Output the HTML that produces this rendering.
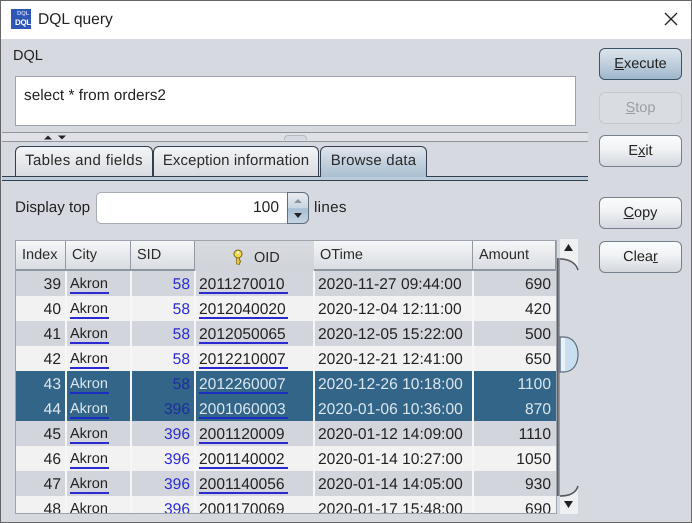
<!DOCTYPE html>
<html><head><meta charset="utf-8">
<style>
html,body{margin:0;padding:0;width:692px;height:523px;overflow:hidden;background:#fff}
*{box-sizing:border-box}
body{font-family:"Liberation Sans",sans-serif;font-size:14px;color:#222;position:relative;text-rendering:geometricPrecision}
#w{position:absolute;left:0;top:0;width:692px;height:523px;filter:blur(.35px);overflow:hidden}
.a{position:absolute}
.t{position:absolute;white-space:nowrap;line-height:16px}
.btn{position:absolute;left:599px;width:83px;height:32px;border:1px solid #75808c;border-radius:6px;background:linear-gradient(#fbfcfd,#f0f2f4 45%,#d3d8de);text-align:center;line-height:30px;font-size:14.5px;color:#222}
.tab{position:absolute;top:146px;height:30px;border:1px solid #333f4d;border-bottom:none;border-radius:6px 6px 0 0;background:linear-gradient(#f4f5f7,#d8dbe0);text-align:center;line-height:28px;font-size:15px;color:#2a2a2a}
.hd{position:absolute;top:241px;height:30px;background:linear-gradient(#f5f6f8,#d9dce1);border-right:1px solid #9299a3;border-bottom:2px solid #8e96a0;font-size:14.5px;line-height:29px;padding-left:6px;color:#2a2a2a}
.r{position:absolute;left:16px;width:540px;height:25px}
.c{position:absolute;top:0;height:25px;line-height:27px;font-size:15.6px;white-space:nowrap;color:#222}
.k{font-size:14.5px}
.r.o{background:#d2d5db}.r.e{background:#f2f2f3}.r.s{background:#336588}
.rt{text-align:right}
.u{position:absolute;height:2px;background:#2a2ad0;top:21px}
.bl{color:#2a2ad0}
.s .c{color:#dbe6ef}
.s .bl{color:#1b2f9d}
.s .u{background:#1a2fc0}
.v{position:absolute;top:271px;width:2px;height:242px;background:#f6f6f7}
</style></head><body><div id="w">
<div class="a" style="left:0;top:0;width:692px;height:523px;background:#d6d9df;border:1px solid #666"></div>
<div class="a" style="left:1px;top:1px;width:690px;height:38px;background:#fff"></div>
<div class="a" style="left:11px;top:9px;width:20px;height:20px;background:#2f55b5;overflow:hidden">
<div class="t" style="left:6px;top:2px;font-size:6px;line-height:7px;color:#b9c9ee;font-weight:bold;letter-spacing:-.2px">DQL</div>
<div class="t" style="left:4px;top:9px;font-size:8px;line-height:9px;color:#fff;font-weight:bold;letter-spacing:-.3px">DQL</div>
</div>
<div class="t" style="left:38px;top:12px;font-size:15.6px;color:#222">DQL query</div>
<svg class="a" style="left:663px;top:11px" width="16" height="16"><path d="M2 2L14 14M14 2L2 14" stroke="#222" stroke-width="1.300" fill="none"/></svg>

<div class="t" style="left:13px;top:48px;font-size:14.5px">DQL</div>
<div class="a" style="left:15px;top:76px;width:561px;height:50px;background:#fff;border:1px solid #9da3ab"></div>
<div class="t" style="left:24px;top:88px;font-size:15.4px">select * from orders2</div>

<div class="a" style="left:2px;top:132px;width:586px;height:1px;background:#8f959d"></div>
<div class="a" style="left:2px;top:141px;width:586px;height:1px;background:#8f959d"></div>
<div class="a" style="left:2px;top:133px;width:586px;height:8px;background:#dfe1e6"></div>
<svg class="a" style="left:44px;top:135px" width="23" height="5"><path d="M0 4.500L4 .5L8 4.500ZM14 .5H22L18 4.500Z" fill="#222"/></svg>
<div class="a" style="left:284px;top:135px;width:23px;height:5px;border:1px solid #b4b9c0;border-bottom:none;border-radius:4px 4px 0 0;background:#d6d9df"></div>

<div class="tab" style="left:15px;width:138px;letter-spacing:.35px">Tables and fields</div>
<div class="tab" style="left:153px;width:166px;letter-spacing:.1px">Exception information</div>
<div class="tab" style="left:320px;width:107px;background:linear-gradient(#dfe4ea,#a9bfd2);height:31px;letter-spacing:.2px">Browse data</div>
<div class="a" style="left:2px;top:176px;width:318px;height:1px;background:#333f4d"></div>
<div class="a" style="left:426px;top:176px;width:162px;height:1px;background:#333f4d"></div>
<div class="a" style="left:2px;top:177px;width:586px;height:3px;background:#bccbd9"></div>
<div class="a" style="left:2px;top:180px;width:586px;height:1px;background:#333f4d"></div>

<div class="t" style="left:15px;top:200px;font-size:15.2px">Display top</div>
<div class="a" style="left:96px;top:192px;width:192px;height:32px;background:#fff;border:1px solid #a6acb4;border-radius:5px 0 0 5px"></div>
<div class="t" style="left:253px;top:200px;font-size:15.6px">100</div>
<div class="a" style="left:287px;top:192px;width:22px;height:32px;border:1px solid #5f6d7c;border-radius:0 6px 6px 0;background:linear-gradient(#e9edf1,#c9d5e0 50%,#a7bfd2 52%,#c5d4e0)"></div>
<svg class="a" style="left:293px;top:198px" width="10" height="22"><path d="M1 5L5 1L9 5Z" fill="#8b929b"/><path d="M1 15H9L5 20Z" fill="#222"/></svg>
<div class="t" style="left:314px;top:200px;font-size:15.2px;letter-spacing:.3px">lines</div>

<div class="a" style="left:15px;top:240px;width:542px;height:274px;background:#f2f2f3;border:1px solid #9da3ab"></div>
<div class="hd" style="left:16px;width:50px">Index</div>
<div class="hd" style="left:66px;width:65px">City</div>
<div class="hd" style="left:131px;width:64px">SID</div>
<div class="a" style="left:195px;top:241px;width:119px;height:30px;background:linear-gradient(#d8dbe0,#d0d3d9)"></div>
<svg class="a" style="left:232px;top:249px" width="12" height="16"><circle cx="6" cy="5" r="4" fill="#f4d850" stroke="#7a6518" stroke-width="1"/><circle cx="6" cy="3.500" r="1.100" fill="#fff"/><path d="M4.500 9V15L7.500 15.500V13.500H8.500V11.500H7.500V9Z" fill="#ecc838" stroke="#7a6518" stroke-width=".7"/></svg>
<div class="t" style="left:254px;top:250px;font-size:14.5px;color:#2a2a2a">OID</div>
<div class="hd" style="left:314px;width:159px">OTime</div>
<div class="hd" style="left:473px;width:83px">Amount</div>

<div class="r o" style="top:271px"><div class="c rt" style="left:0;width:45px">39</div><div class="c k" style="left:54px">Akron</div><div class="u" style="left:54px;width:39px"></div><div class="c rt bl" style="left:115px;width:59px">58</div><div class="c" style="left:183px">2011270010</div><div class="u" style="left:183px;width:89px"></div><div class="c" style="left:302px">2020-11-27 09:44:00</div><div class="c rt" style="left:457px;width:78px">690</div></div>
<div class="r e" style="top:296px"><div class="c rt" style="left:0;width:45px">40</div><div class="c k" style="left:54px">Akron</div><div class="u" style="left:54px;width:39px"></div><div class="c rt bl" style="left:115px;width:59px">58</div><div class="c" style="left:183px">2012040020</div><div class="u" style="left:183px;width:89px"></div><div class="c" style="left:302px">2020-12-04 12:11:00</div><div class="c rt" style="left:457px;width:78px">420</div></div>
<div class="r o" style="top:321px"><div class="c rt" style="left:0;width:45px">41</div><div class="c k" style="left:54px">Akron</div><div class="u" style="left:54px;width:39px"></div><div class="c rt bl" style="left:115px;width:59px">58</div><div class="c" style="left:183px">2012050065</div><div class="u" style="left:183px;width:89px"></div><div class="c" style="left:302px">2020-12-05 15:22:00</div><div class="c rt" style="left:457px;width:78px">500</div></div>
<div class="r e" style="top:346px"><div class="c rt" style="left:0;width:45px">42</div><div class="c k" style="left:54px">Akron</div><div class="u" style="left:54px;width:39px"></div><div class="c rt bl" style="left:115px;width:59px">58</div><div class="c" style="left:183px">2012210007</div><div class="u" style="left:183px;width:89px"></div><div class="c" style="left:302px">2020-12-21 12:41:00</div><div class="c rt" style="left:457px;width:78px">650</div></div>
<div class="r s" style="top:371px"><div class="c rt" style="left:0;width:45px">43</div><div class="c k" style="left:54px">Akron</div><div class="u" style="left:54px;width:39px"></div><div class="c rt bl" style="left:115px;width:59px">58</div><div class="c" style="left:183px">2012260007</div><div class="u" style="left:183px;width:89px"></div><div class="c" style="left:302px">2020-12-26 10:18:00</div><div class="c rt" style="left:457px;width:78px">1100</div></div>
<div class="r s" style="top:396px"><div class="c rt" style="left:0;width:45px">44</div><div class="c k" style="left:54px">Akron</div><div class="u" style="left:54px;width:39px"></div><div class="c rt bl" style="left:115px;width:59px">396</div><div class="c" style="left:183px">2001060003</div><div class="u" style="left:183px;width:89px"></div><div class="c" style="left:302px">2020-01-06 10:36:00</div><div class="c rt" style="left:457px;width:78px">870</div></div>
<div class="r o" style="top:421px"><div class="c rt" style="left:0;width:45px">45</div><div class="c k" style="left:54px">Akron</div><div class="u" style="left:54px;width:39px"></div><div class="c rt bl" style="left:115px;width:59px">396</div><div class="c" style="left:183px">2001120009</div><div class="u" style="left:183px;width:89px"></div><div class="c" style="left:302px">2020-01-12 14:09:00</div><div class="c rt" style="left:457px;width:78px">1110</div></div>
<div class="r e" style="top:446px"><div class="c rt" style="left:0;width:45px">46</div><div class="c k" style="left:54px">Akron</div><div class="u" style="left:54px;width:39px"></div><div class="c rt bl" style="left:115px;width:59px">396</div><div class="c" style="left:183px">2001140002</div><div class="u" style="left:183px;width:89px"></div><div class="c" style="left:302px">2020-01-14 10:27:00</div><div class="c rt" style="left:457px;width:78px">1050</div></div>
<div class="r o" style="top:471px"><div class="c rt" style="left:0;width:45px">47</div><div class="c k" style="left:54px">Akron</div><div class="u" style="left:54px;width:39px"></div><div class="c rt bl" style="left:115px;width:59px">396</div><div class="c" style="left:183px">2001140056</div><div class="u" style="left:183px;width:89px"></div><div class="c" style="left:302px">2020-01-14 14:05:00</div><div class="c rt" style="left:457px;width:78px">930</div></div>
<div class="r e" style="top:496px;height:17px;overflow:hidden"><div class="c rt" style="left:0;width:45px">48</div><div class="c k" style="left:54px">Akron</div><div class="c rt bl" style="left:115px;width:59px">396</div><div class="c" style="left:183px">2001170069</div><div class="c" style="left:302px">2020-01-17 15:48:00</div><div class="c rt" style="left:457px;width:78px">690</div></div>

<div class="v" style="left:65px"></div><div class="v" style="left:130px"></div><div class="v" style="left:194px"></div><div class="v" style="left:313px"></div><div class="v" style="left:472px"></div>

<div class="a" style="left:557px;top:258px;width:3px;height:238px;background:linear-gradient(90deg,#4d5056,#a5a9af)"></div>
<svg class="a" style="left:557px;top:238px" width="22" height="36"><path d="M3 1H21V32C19 24 12 20 3 20Z" fill="#eef0f2"/><path d="M3 21C12 21 19 25 21 32" stroke="#55585e" fill="none" stroke-width="1.500"/><path d="M7 13L11.500 6L16 13Z" fill="#222"/></svg>
<svg class="a" style="left:557px;top:484px" width="22" height="34"><path d="M3 13C12 13 19 10 21 2V30H3Z" fill="#eef0f2"/><path d="M3 12C12 12 19 9 21 2" stroke="#55585e" fill="none" stroke-width="1.500"/><path d="M7 17H16L11.500 24Z" fill="#222"/></svg>
<svg class="a" style="left:558px;top:336px" width="22" height="38"><path d="M2 1H6C15 1 20 9 20 18.500C20 28 15 36 6 36H2Z" fill="#c9deee" stroke="#5f6d7c" stroke-width="1.200"/><path d="M3 2H7V35H3Z" fill="#eaf2f8"/></svg>

<div class="btn" style="top:48px;background:linear-gradient(#dce4eb,#c2d1de 45%,#9fb7cb);border-color:#3f5366"><u>E</u>xecute</div>
<div class="btn" style="top:92px;background:#d9dce1;border-color:#c6cad0;color:#9a9fa6"><u>S</u>top</div>
<div class="btn" style="top:135px">E<u>x</u>it</div>
<div class="btn" style="top:197px"><u>C</u>opy</div>
<div class="btn" style="top:241px">Clea<u>r</u></div>
</div></body></html>
